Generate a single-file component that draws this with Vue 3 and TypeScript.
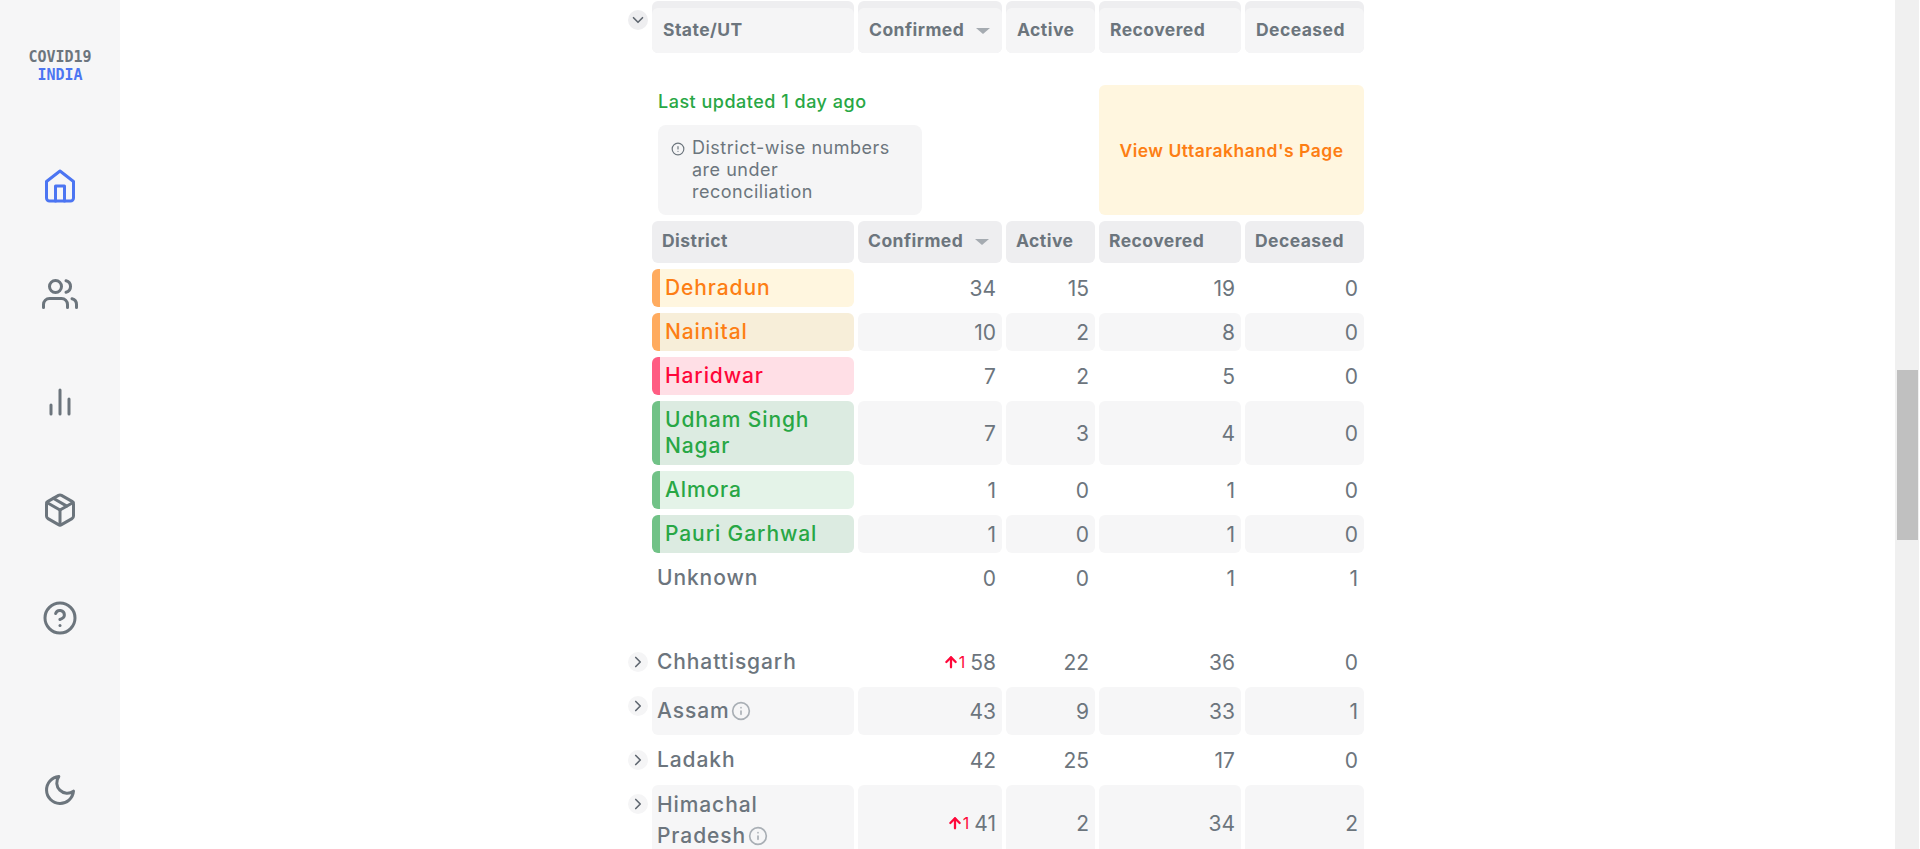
<script setup lang="ts">
interface Row {
  name: string[];
  nums: number[];
  delta?: number;
  info?: boolean;
  tone?: string;
}

const headers = ["Confirmed", "Active", "Recovered", "Deceased"];

const districts: Row[] = [
  { name: ["Dehradun"], nums: [34, 15, 19, 0], tone: "orange-1" },
  { name: ["Nainital"], nums: [10, 2, 8, 0], tone: "orange-2" },
  { name: ["Haridwar"], nums: [7, 2, 5, 0], tone: "red" },
  { name: ["Udham Singh Nagar"], nums: [7, 3, 4, 0], tone: "green-2" },
  { name: ["Almora"], nums: [1, 0, 1, 0], tone: "green-1" },
  { name: ["Pauri Garhwal"], nums: [1, 0, 1, 0], tone: "green-2" },
  { name: ["Unknown"], nums: [0, 0, 1, 1] },
];

const states: Row[] = [
  { name: ["Chhattisgarh"], nums: [58, 22, 36, 0], delta: 1 },
  { name: ["Assam"], nums: [43, 9, 33, 1], info: true },
  { name: ["Ladakh"], nums: [42, 25, 17, 0] },
  { name: ["Himachal", "Pradesh"], nums: [41, 2, 34, 2], delta: 1, info: true },
];
</script>

<template>
  <div class="page">
    <aside class="sidebar">
      <div class="logo">
        <div>COVID19</div>
        <div class="logo-blue">INDIA</div>
      </div>
      <nav class="nav">
        <svg class="nav-icon active" viewBox="0 0 24 24">
          <path d="M3 9l9-7 9 7v11a2 2 0 0 1-2 2H5a2 2 0 0 1-2-2z" />
          <polyline points="9 22 9 12 15 12 15 22" />
        </svg>
        <svg class="nav-icon" viewBox="0 0 24 24">
          <path d="M17 21v-2a4 4 0 0 0-4-4H5a4 4 0 0 0-4 4v2" />
          <circle cx="9" cy="7" r="4" />
          <path d="M23 21v-2a4 4 0 0 0-3-3.87" />
          <path d="M16 3.13a4 4 0 0 1 0 7.75" />
        </svg>
        <svg class="nav-icon" viewBox="0 0 24 24">
          <line x1="18" y1="20" x2="18" y2="10" />
          <line x1="12" y1="20" x2="12" y2="4" />
          <line x1="6" y1="20" x2="6" y2="14" />
        </svg>
        <svg class="nav-icon" viewBox="0 0 24 24">
          <line x1="16.5" y1="9.4" x2="7.5" y2="4.21" />
          <path d="M21 16V8a2 2 0 0 0-1-1.73l-7-4a2 2 0 0 0-2 0l-7 4A2 2 0 0 0 3 8v8a2 2 0 0 0 1 1.73l7 4a2 2 0 0 0 2 0l7-4A2 2 0 0 0 21 16z" />
          <polyline points="3.27 6.96 12 12.01 20.73 6.96" />
          <line x1="12" y1="22.08" x2="12" y2="12" />
        </svg>
        <svg class="nav-icon" viewBox="0 0 24 24">
          <circle cx="12" cy="12" r="10" />
          <path d="M9.09 9a3 3 0 0 1 5.83 1c0 2-3 3-3 3" />
          <line x1="12" y1="17" x2="12.01" y2="17" />
        </svg>
      </nav>
      <svg class="nav-icon moon" viewBox="0 0 24 24">
        <path d="M21 12.79A9 9 0 1 1 11.21 3 7 7 0 0 0 21 12.79z" />
      </svg>
    </aside>

    <main class="main">
      <div class="table">
        <!-- state header -->
        <div class="head-wrap">
          <span class="toggle toggle-dark">
            <svg viewBox="0 0 24 24"><polyline points="6 9 12 15 18 9" /></svg>
          </span>
          <div class="head">State/UT</div>
        </div>
        <div v-for="h in headers" :key="'s' + h" class="head-wrap">
          <div class="head">
            {{ h }}
            <i v-if="h === 'Confirmed'" class="sort"></i>
          </div>
        </div>

        <!-- opened state -->
        <div class="panel">
          <div class="panel-left">
            <div class="updated">Last updated 1 day ago</div>
            <div class="notice">
              <svg class="notice-icon" viewBox="0 0 24 24">
                <circle cx="12" cy="12" r="10" />
                <line x1="12" y1="8" x2="12" y2="12" />
                <line x1="12" y1="16" x2="12.01" y2="16" />
              </svg>
              <span>District-wise numbers<br />are under<br />reconciliation</span>
            </div>
          </div>
          <div class="state-link">View Uttarakhand's Page</div>
        </div>

        <div class="dhead first">District</div>
        <div v-for="h in headers" :key="'d' + h" class="dhead">
          {{ h }}
          <i v-if="h === 'Confirmed'" class="sort"></i>
        </div>

        <template v-for="(d, i) in districts" :key="d.name[0]">
          <div class="name" :class="d.tone">{{ d.name[0] }}</div>
          <div v-for="(n, j) in d.nums" :key="j" class="num" :class="{ grey: d.tone && i % 2 === 1 }">{{ n }}</div>
        </template>

        <div class="spacer"></div>

        <template v-for="(s, i) in states" :key="s.name[0]">
          <div class="name state" :class="{ grey: i % 2 === 1, tall: s.info, double: s.name.length > 1 }">
            <span class="toggle">
              <svg viewBox="0 0 24 24"><polyline points="9 18 15 12 9 6" /></svg>
            </span>
            <div v-for="(part, k) in s.name" :key="part">
              {{ part }}
              <svg v-if="s.info && k === s.name.length - 1" class="info" viewBox="0 0 24 24">
                <circle cx="12" cy="12" r="10" />
                <line x1="12" y1="16" x2="12" y2="12" />
                <line x1="12" y1="8" x2="12.01" y2="8" />
              </svg>
            </div>
          </div>
          <div v-for="(n, j) in s.nums" :key="j" class="num" :class="{ grey: i % 2 === 1 }">
            <span v-if="j === 0 && s.delta" class="delta">
              <svg viewBox="0 0 24 24"><line x1="12" y1="20" x2="12" y2="5" /><polyline points="5 12 12 5 19 12" /></svg>{{ s.delta }}
            </span>
            {{ n }}
          </div>
        </template>
      </div>
    </main>

    <div class="scrollbar"><div class="thumb"></div></div>
  </div>
</template>

<style scoped>
.page {
  display: flex;
  height: 849px;
  overflow: hidden;
  background: #fff;
  font-family: Inter, "Noto Sans", sans-serif;
  color: #6c757d;
}

.sidebar {
  flex: 0 0 120px;
  display: flex;
  flex-direction: column;
  align-items: center;
  padding: 48px 0 41px;
  box-sizing: border-box;
  background: #f6f6f7;
}

.logo {
  font-family: "DejaVu Sans Mono", monospace;
  font-size: 15px;
  font-weight: 700;
  line-height: 18px;
  text-align: center;
}

.logo-blue {
  color: #4c75f2;
}

.nav {
  display: flex;
  flex-direction: column;
  gap: 72px;
  margin-top: 84px;
}

.nav-icon {
  width: 36px;
  height: 36px;
  fill: none;
  stroke: #6c757d;
  stroke-width: 2;
  stroke-linecap: round;
  stroke-linejoin: round;
}

.nav-icon.active {
  stroke: #4c75f2;
}

.moon {
  margin-top: auto;
}

.main {
  flex: 1;
  display: flex;
  justify-content: center;
  padding-top: 1px;
  min-width: 0;
}

.table {
  display: grid;
  grid-template-columns: 202px 144px 89px 142px 119px;
  grid-auto-rows: min-content;
  column-gap: 4px;
  row-gap: 6px;
  width: 712px;
  margin-left: 1px;
}

.head-wrap {
  position: relative;
  height: 52px;
  padding-top: 7px;
  box-sizing: border-box;
  border-radius: 6px;
  background: #eeeef0;
}

.head {
  display: flex;
  align-items: center;
  justify-content: flex-start;
  height: 45px;
  padding-left: 11px;
  padding-bottom: 2px;
  box-sizing: border-box;
  border-radius: 6px;
  background: #f5f5f6;
  font-size: 17.5px;
  font-weight: 700;
  letter-spacing: 0.45px;
}

.dhead {
  display: flex;
  align-items: center;
  height: 42px;
  padding-left: 10px;
  padding-bottom: 3px;
  box-sizing: border-box;
  border-radius: 6px;
  background: #eeeef0;
  font-size: 17.5px;
  font-weight: 700;
  letter-spacing: 0.45px;
}

.sort {
  width: 0;
  height: 0;
  margin-left: 12px;
  margin-top: 3px;
  border-left: 7px solid transparent;
  border-right: 7px solid transparent;
  border-top: 6px solid #a5abb1;
}

.toggle {
  position: absolute;
  left: -24px;
  top: 9px;
  display: flex;
  align-items: center;
  justify-content: center;
  width: 20px;
  height: 20px;
  border-radius: 50%;
  background: #f5f5f6;
}

.toggle-dark {
  background: #eeeef0;
}

.toggle svg {
  width: 18px;
  height: 18px;
  fill: none;
  stroke: #5f6770;
  stroke-width: 2.2;
  stroke-linecap: round;
  stroke-linejoin: round;
}

.panel {
  grid-column: 1 / -1;
  display: flex;
  justify-content: space-between;
  align-items: flex-start;
  padding-top: 26px;
}

.panel-left {
  padding-left: 6px;
}

.updated {
  height: 40px;
  padding-top: 6px;
  box-sizing: border-box;
  font-size: 18px;
  font-weight: 500;
  line-height: 22px;
  letter-spacing: 0.5px;
  color: #28a745;
}

.notice {
  display: flex;
  gap: 7px;
  width: 264px;
  height: 90px;
  padding: 12px 13px;
  box-sizing: border-box;
  border-radius: 8px;
  background: #f5f5f6;
  font-size: 18px;
  line-height: 22px;
  letter-spacing: 0.5px;
  white-space: nowrap;
}

.notice-icon {
  flex: 0 0 14px;
  width: 14px;
  height: 14px;
  margin-top: 5px;
  fill: none;
  stroke: #6c757d;
  stroke-width: 2;
  stroke-linecap: round;
  stroke-linejoin: round;
}

.state-link {
  display: flex;
  align-items: center;
  justify-content: center;
  width: 265px;
  height: 130px;
  border-radius: 6px;
  background: #fff6df;
  color: #fd7e14;
  font-size: 17.5px;
  font-weight: 600;
  letter-spacing: 0.5px;
}

.name {
  position: relative;
  padding: 6px 5px;
  min-height: 38px;
  box-sizing: border-box;
  border-radius: 6px;
  font-size: 21px;
  font-weight: 500;
  line-height: 26px;
  letter-spacing: 0.9px;
}

.orange-1,
.orange-2,
.red,
.green-1,
.green-2 {
  border-left: 8px solid;
}

.orange-1 {
  background: #fff6df;
  border-color: #ffab5f;
  color: #fd7e14;
}

.orange-2 {
  background: #f7eed9;
  border-color: #ffab5f;
  color: #fd7e14;
}

.red {
  background: #ffdfe6;
  border-color: #ff5d83;
  color: #ff073a;
}

.green-1 {
  background: #e4f3e8;
  border-color: #71c287;
  color: #28a745;
}

.green-2 {
  background: #dcebe1;
  border-color: #71c287;
  color: #28a745;
}

.state.tall {
  height: 48px;
  padding: 8px 5px 0;
  line-height: 31px;
}

.state.double {
  height: 76px;
  padding-top: 4px;
}

.num {
  display: flex;
  align-items: center;
  justify-content: flex-end;
  gap: 5px;
  padding-right: 6px;
  border-radius: 6px;
  font-size: 21px;
  font-weight: 400;
}

.grey {
  background: #f6f6f7;
}

.spacer {
  grid-column: 1 / -1;
  height: 34px;
}

.info {
  display: inline-block;
  width: 20px;
  height: 20px;
  margin-left: -5px;
  vertical-align: -3px;
  fill: none;
  stroke: #a9afb5;
  stroke-width: 2;
  stroke-linecap: round;
  stroke-linejoin: round;
}

.delta {
  display: inline-flex;
  align-items: center;
  color: #ff073a;
  font-size: 16px;
}

.delta svg {
  width: 16px;
  height: 16px;
  margin: 0 0 0 -3px;
  fill: none;
  stroke: #ff073a;
  stroke-width: 3.4;
  stroke-linecap: round;
  stroke-linejoin: round;
}

.scrollbar {
  flex: 0 0 24px;
  margin-right: 1px;
  padding: 370px 1px 0 2px;
  box-sizing: border-box;
  background: #f0f0f0;
}

.thumb {
  height: 170px;
  background: #c0c0c0;
}
</style>
